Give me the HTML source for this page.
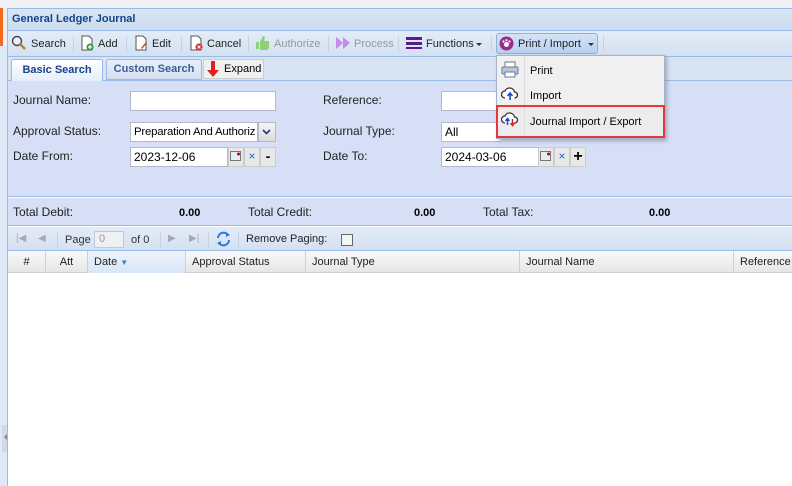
<!DOCTYPE html>
<html><head><style>
*{margin:0;padding:0;box-sizing:border-box}
body{width:792px;height:486px;overflow:hidden;background:#fff;font-family:"Liberation Sans",Arial,sans-serif;font-size:11px;color:#000;position:relative}
.a{position:absolute}
.lbl{position:absolute;font-size:12px;color:#222}
.inp{position:absolute;background:#fff;border:1px solid #b5b8c8;height:20px;font-size:12px;padding:2px 3px;line-height:15px}
.tb{position:absolute;top:33px;height:22px;line-height:22px;font-size:11px;color:#222}
.sep{position:absolute;top:36px;width:1px;height:16px;background:#c5d2e6}
.hd{position:absolute;top:251px;height:22px;line-height:22px;border-right:1px solid #d0d0d0;font-size:11px;color:#222;padding-left:6px}
</style></head><body>
<div class="a" style="left:0;top:0;width:792px;height:8px;background:#eef0f3"></div>
<div class="a" style="left:0;top:8px;width:3px;height:38px;background:#f26a1b"></div>
<div class="a" style="left:0;top:46px;width:7px;height:440px;background:#dfe8f6"></div>
<div class="a" style="left:3px;top:8px;width:4px;height:38px;background:#eef0f3"></div>
<div class="a" style="left:2px;top:425px;width:5px;height:27px;background:#cfd9e8"></div>
<div class="a" style="left:4px;top:434px;width:0;height:0;border-top:3px solid transparent;border-bottom:3px solid transparent;border-right:3px solid #888"></div>
<div class="a" style="left:7px;top:8px;width:1px;height:478px;background:#99bbe8"></div>
<!-- title -->
<div class="a" style="left:8px;top:8px;width:784px;height:23px;background:linear-gradient(#dae6f4,#cddcef);border-top:1px solid #99bbe8;border-bottom:1px solid #99bbe8"></div>
<div class="a" style="left:12px;top:13px;font-weight:bold;color:#15428b;font-size:11px">General Ledger Journal</div>
<!-- toolbar -->
<div class="a" style="left:8px;top:31px;width:784px;height:26px;background:linear-gradient(#e3ecf8,#d4e1f2);border-bottom:1px solid #99bbe8"></div>
<svg class="a" style="left:11px;top:35px" width="16" height="16"><circle cx="6" cy="6" r="4.5" fill="#eef" stroke="#444" stroke-width="1.4"/><line x1="9" y1="9" x2="14" y2="14" stroke="#b8842a" stroke-width="2.5"/></svg>
<div class="tb" style="left:31px">Search</div><div class="sep" style="left:73px"></div>
<svg class="a" style="left:79px;top:35px" width="16" height="16"><path d="M3 1h7l3 3v11H3z" fill="#fff" stroke="#555"/><circle cx="11" cy="12" r="3.5" fill="#2a9a3a"/><path d="M9 12h4M11 10v4" stroke="#fff" stroke-width="1.3"/></svg>
<div class="tb" style="left:98px">Add</div><div class="sep" style="left:126px"></div>
<svg class="a" style="left:133px;top:35px" width="16" height="16"><path d="M3 1h7l3 3v11H3z" fill="#fff" stroke="#555"/><path d="M8 13l5-6 1 1-5 6z" fill="#d04020"/></svg>
<div class="tb" style="left:152px">Edit</div><div class="sep" style="left:181px"></div>
<svg class="a" style="left:188px;top:35px" width="16" height="16"><path d="M3 1h7l3 3v11H3z" fill="#fff" stroke="#555"/><circle cx="11" cy="12" r="3.5" fill="#d8242a"/><path d="M9.5 10.5l3 3M12.5 10.5l-3 3" stroke="#fff" stroke-width="1.2"/></svg>
<div class="tb" style="left:207px">Cancel</div><div class="sep" style="left:248px"></div>
<svg class="a" style="left:255px;top:35px" width="16" height="16"><rect x="1" y="7" width="3" height="7" fill="#8fcf7a"/><path d="M5 7l3-6 2 1-1 4h5v7l-2 2H5z" fill="#8fcf7a"/></svg>
<div class="tb" style="left:274px;color:#999">Authorize</div><div class="sep" style="left:328px"></div>
<svg class="a" style="left:335px;top:36px" width="16" height="14"><path d="M1 1l7 6-7 6zM8 1l7 6-7 6z" fill="#c68ae8"/></svg>
<div class="tb" style="left:354px;color:#999">Process</div><div class="sep" style="left:398px"></div>
<svg class="a" style="left:406px;top:37px" width="16" height="12"><rect y="0" width="16" height="3" fill="#5a1a8a"/><rect y="5" width="16" height="3" fill="#5a1a8a"/><rect y="10" width="16" height="2.5" fill="#5a1a8a"/></svg>
<div class="tb" style="left:426px">Functions</div>
<div class="a" style="left:476px;top:43px;border-left:3px solid transparent;border-right:3px solid transparent;border-top:3px solid #333"></div>
<div class="sep" style="left:491px"></div>
<div class="a" style="left:496px;top:33px;width:102px;height:21px;background:linear-gradient(#d4e4f7,#b7d0ee);border:1px solid #8fb0d8;border-radius:3px"></div>
<svg class="a" style="left:499px;top:36px" width="15" height="15"><circle cx="7.5" cy="7.5" r="7" fill="#9a2b8a"/><circle cx="7.5" cy="8.5" r="2.5" fill="#fff"/><circle cx="4.5" cy="5.5" r="1.1" fill="#fff"/><circle cx="7.5" cy="4.2" r="1.1" fill="#fff"/><circle cx="10.5" cy="5.5" r="1.1" fill="#fff"/></svg>
<div class="tb" style="left:518px">Print / Import</div>
<div class="a" style="left:588px;top:43px;border-left:3px solid transparent;border-right:3px solid transparent;border-top:3px solid #333"></div>
<div class="sep" style="left:603px"></div>
<!-- tabs -->
<div class="a" style="left:8px;top:57px;width:784px;height:24px;background:#d8e3f3;border-bottom:1px solid #99bbe8"></div>
<div class="a" style="left:11px;top:59px;width:92px;height:22px;background:linear-gradient(#fff,#e6eef9);border:1px solid #99bbe8;border-bottom:none;border-radius:3px 3px 0 0;font-weight:bold;color:#15428b;text-align:center;line-height:20px">Basic Search</div>
<div class="a" style="left:106px;top:59px;width:96px;height:21px;background:linear-gradient(#e8eef8,#d4e0f2);border:1px solid #99bbe8;border-radius:3px 3px 0 0;font-weight:bold;color:#3a5e95;text-align:center;line-height:19px">Custom Search</div>
<div class="a" style="left:203px;top:59px;width:61px;height:20px;background:#f0f0f0;border:1px solid #ccc"></div>
<svg class="a" style="left:206px;top:60px" width="14" height="18"><path d="M5 1h4v9h4l-6 7-6-7h4z" fill="#e02020"/></svg>
<div class="a" style="left:224px;top:63px;font-size:11px">Expand</div>
<!-- form -->
<div class="a" style="left:8px;top:81px;width:784px;height:116px;background:#d6dff6;border-bottom:1px solid #99bbe8"></div>
<div class="lbl" style="left:13px;top:93px">Journal Name:</div>
<div class="inp" style="left:130px;top:91px;width:146px"></div>
<div class="lbl" style="left:323px;top:93px">Reference:</div>
<div class="inp" style="left:441px;top:91px;width:60px;border-right:none"></div>
<div class="lbl" style="left:13px;top:124px">Approval Status:</div>
<div class="inp" style="left:130px;top:122px;width:128px;overflow:hidden;white-space:nowrap;font-size:11.4px;letter-spacing:-0.2px">Preparation And Authoriz</div>
<div class="a" style="left:258px;top:122px;width:18px;height:20px;background:linear-gradient(#f4f4f4,#dcdcdc);border:1px solid #b5b8c8"></div>
<svg class="a" style="left:262px;top:129px" width="9" height="6"><path d="M1 1l3.5 3.5L8 1" stroke="#1a3a7a" stroke-width="1.6" fill="none"/></svg>
<div class="lbl" style="left:323px;top:124px">Journal Type:</div>
<div class="inp" style="left:441px;top:122px;width:60px;border-right:none">All</div>
<div class="lbl" style="left:13px;top:149px">Date From:</div>
<div class="inp" style="left:130px;top:147px;width:98px">2023-12-06</div>
<div class="a" style="left:228px;top:147px;width:16px;height:20px;background:#e8e8e8;border:1px solid #ccc"></div>
<svg class="a" style="left:230px;top:151px" width="12" height="11"><rect x="0.5" y="0.5" width="10" height="9" fill="#e4ecf8" stroke="#777"/><circle cx="8.5" cy="3" r="1.5" fill="#c00"/></svg>
<div class="a" style="left:244px;top:147px;width:16px;height:20px;background:#e8e8e8;border:1px solid #ccc;color:#2266cc;text-align:center;line-height:17px;font-size:12px">×</div>
<div class="a" style="left:260px;top:147px;width:16px;height:20px;background:#e8e8e8;border:1px solid #ccc;text-align:center;line-height:17px;font-size:14px;font-weight:bold">-</div>
<div class="lbl" style="left:323px;top:149px">Date To:</div>
<div class="inp" style="left:441px;top:147px;width:98px">2024-03-06</div>
<div class="a" style="left:538px;top:147px;width:16px;height:20px;background:#e8e8e8;border:1px solid #ccc"></div>
<svg class="a" style="left:540px;top:151px" width="12" height="11"><rect x="0.5" y="0.5" width="10" height="9" fill="#e4ecf8" stroke="#777"/><circle cx="8.5" cy="3" r="1.5" fill="#c00"/></svg>
<div class="a" style="left:554px;top:147px;width:16px;height:20px;background:#e8e8e8;border:1px solid #ccc;color:#2266cc;text-align:center;line-height:17px;font-size:12px">×</div>
<div class="a" style="left:570px;top:147px;width:16px;height:20px;background:#e8e8e8;border:1px solid #ccc;text-align:center;line-height:18px;font-size:16px;font-weight:bold">+</div>
<!-- totals -->
<div class="a" style="left:8px;top:198px;width:784px;height:28px;background:#d6dff6;border-bottom:1px solid #99bbe8"></div>
<div class="lbl" style="left:13px;top:205px">Total Debit:</div>
<div class="a" style="left:179px;top:207px;font-weight:bold;font-size:11px">0.00</div>
<div class="lbl" style="left:248px;top:205px">Total Credit:</div>
<div class="a" style="left:414px;top:207px;font-weight:bold;font-size:11px">0.00</div>
<div class="lbl" style="left:483px;top:205px">Total Tax:</div>
<div class="a" style="left:649px;top:207px;font-weight:bold;font-size:11px">0.00</div>
<!-- paging -->
<div class="a" style="left:8px;top:227px;width:784px;height:24px;background:linear-gradient(#e3ecf8,#d4e1f2);border-bottom:1px solid #99bbe8"></div>
<div class="a" style="left:16px;top:233px;color:#aaa;font-size:10px">|◀</div>
<div class="a" style="left:38px;top:233px;color:#aaa;font-size:10px">◀</div>
<div class="sep" style="left:57px;top:232px"></div>
<div class="a" style="left:65px;top:234px;color:#333">Page</div>
<div class="a" style="left:94px;top:231px;width:30px;height:17px;background:#eef0f4;border:1px solid #c0c8d8;color:#999;padding-left:4px;line-height:15px">0</div>
<div class="a" style="left:131px;top:234px;color:#333">of 0</div>
<div class="sep" style="left:160px;top:232px"></div>
<div class="a" style="left:168px;top:233px;color:#aaa;font-size:10px">▶</div>
<div class="a" style="left:189px;top:233px;color:#aaa;font-size:10px">▶|</div>
<div class="sep" style="left:208px;top:232px"></div>
<svg class="a" style="left:216px;top:231px" width="15" height="16"><path d="M2 7a5.5 5.5 0 0 1 10-3" stroke="#2a7ad8" stroke-width="2" fill="none"/><path d="M13 9a5.5 5.5 0 0 1-10 3" stroke="#2a7ad8" stroke-width="2" fill="none"/><path d="M10 1l4 3-4 2z M5 15l-4-3 4-2z" fill="#2a7ad8"/></svg>
<div class="sep" style="left:238px;top:232px"></div>
<div class="a" style="left:246px;top:233px;color:#222;font-size:11px">Remove Paging:</div>
<div class="a" style="left:341px;top:234px;width:12px;height:12px;background:#f4f4f4;border:1px solid #666"></div>
<!-- grid header -->
<div class="a" style="left:8px;top:251px;width:784px;height:22px;background:linear-gradient(#f9f9f9,#e6e6e6);border-bottom:1px solid #d0d0d0"></div>
<div class="hd" style="left:8px;width:38px;text-align:center;padding:0">#</div>
<div class="hd" style="left:46px;width:42px;text-align:center;padding:0">Att</div>
<div class="hd" style="left:88px;width:98px;background:linear-gradient(#eef4fc,#d8e6f6)">Date <span style="color:#4a7ac8;font-size:8px">▼</span></div>
<div class="hd" style="left:186px;width:120px">Approval Status</div>
<div class="hd" style="left:306px;width:214px">Journal Type</div>
<div class="hd" style="left:520px;width:214px">Journal Name</div>
<div class="hd" style="left:734px;width:58px;border-right:none">Reference</div>
<!-- dropdown menu -->
<div class="a" style="left:496px;top:55px;width:169px;height:84px;background:#f0f0f0;border:1px solid #a0b4cc;box-shadow:2px 2px 4px rgba(0,0,0,.25)"></div>
<div class="a" style="left:524px;top:56px;width:1px;height:82px;background:#dcdcdc"></div>
<svg class="a" style="left:501px;top:61px" width="18" height="17"><rect x="4" y="1" width="10" height="6" fill="#fff" stroke="#6a7a90"/><rect x="1" y="6" width="16" height="7" rx="1" fill="#b8c8dc" stroke="#6a7a90"/><rect x="4" y="11" width="10" height="5" fill="#fff" stroke="#6a7a90"/></svg>
<div class="a" style="left:530px;top:65px;font-size:11px">Print</div>
<svg class="a" style="left:501px;top:86px" width="18" height="16"><path d="M4 12a3.5 3.5 0 0 1 0-7 5 5 0 0 1 9.5 1 3 3 0 0 1 0 6" stroke="#333" stroke-width="1.3" fill="#fff"/><path d="M9 14V8M6.5 10l2.5-3 2.5 3" stroke="#1a4ad8" stroke-width="1.6" fill="none"/></svg>
<div class="a" style="left:530px;top:90px;font-size:11px">Import</div>
<div class="a" style="left:496px;top:105px;width:169px;height:33px;border:2px solid #e8363a;background:#ececec"></div>
<svg class="a" style="left:501px;top:111px" width="18" height="16"><path d="M4 12a3.5 3.5 0 0 1 0-7 5 5 0 0 1 9.5 1 3 3 0 0 1 0 6" stroke="#333" stroke-width="1.3" fill="#fff"/><path d="M6.5 14V8M4.5 10l2-2.5 2 2.5" stroke="#1a4ad8" stroke-width="1.5" fill="none"/><path d="M11.5 8v6M9.5 12l2 2.5 2-2.5" stroke="#e02020" stroke-width="1.5" fill="none"/></svg>
<div class="a" style="left:524px;top:107px;width:1px;height:29px;background:#dcdcdc"></div>
<div class="a" style="left:530px;top:116px;font-size:11px">Journal Import / Export</div>
</body></html>
